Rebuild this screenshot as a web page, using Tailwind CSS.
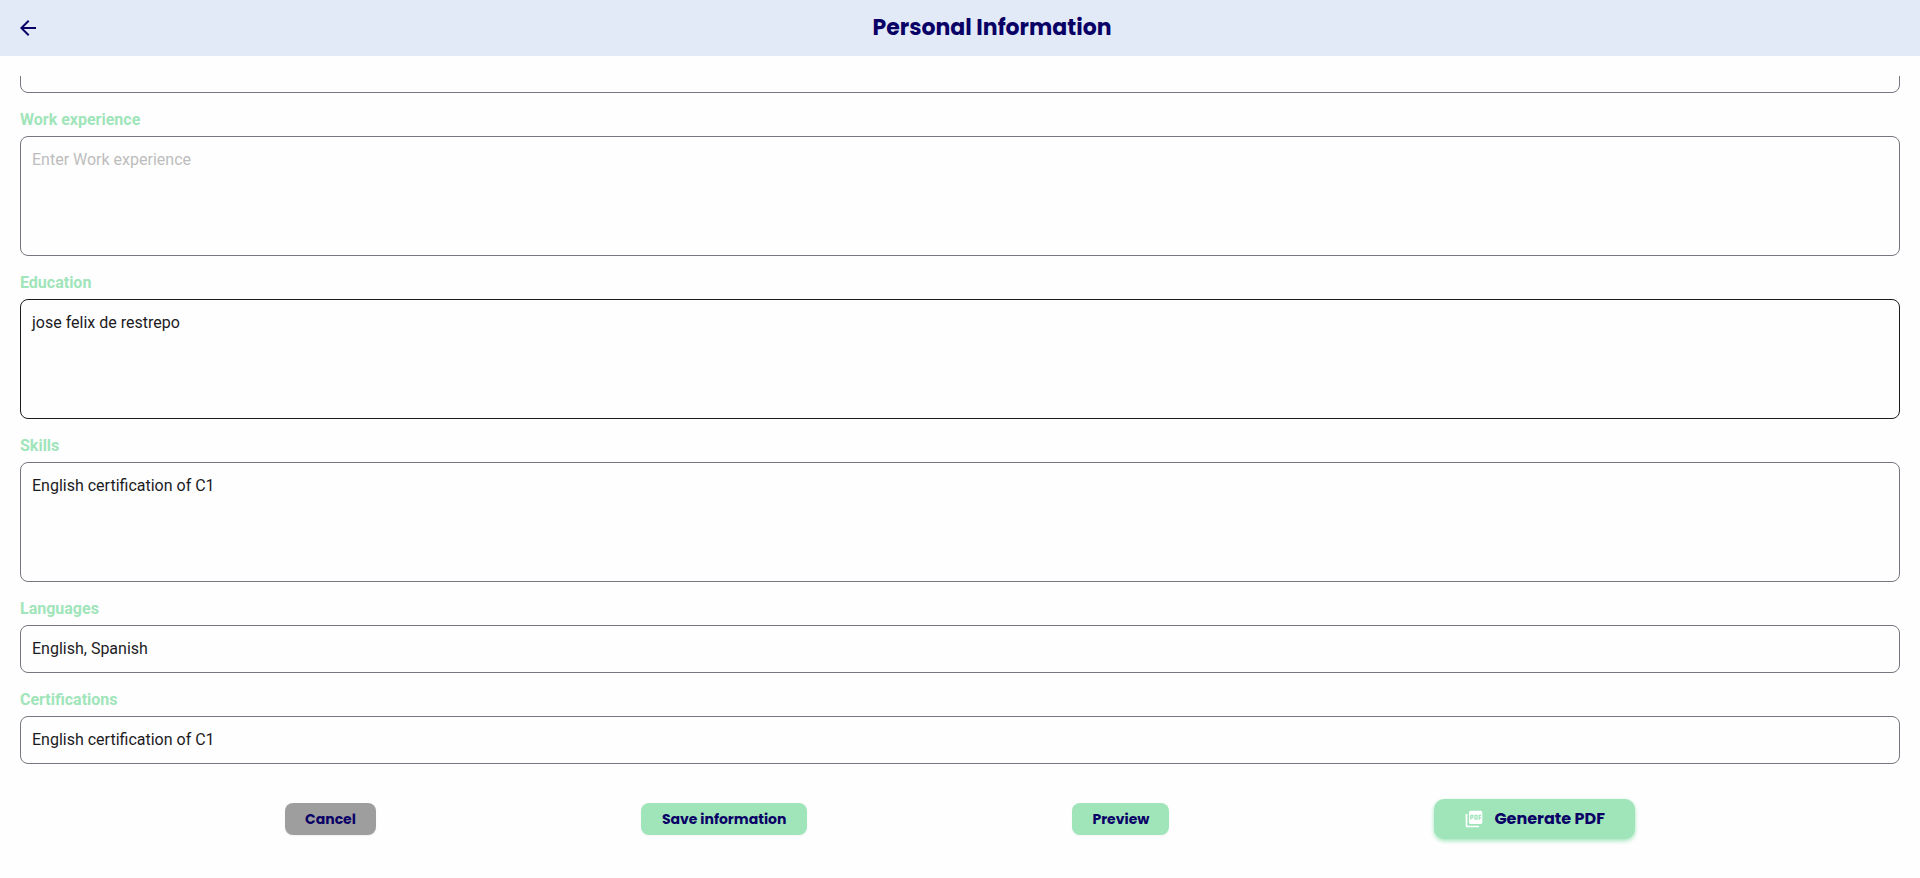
<!DOCTYPE html>
<html lang="en">
<head>
<meta charset="utf-8">
<meta name="viewport" content="width=device-width, initial-scale=1">
<title>Personal Information</title>
<script src="https://cdn.jsdelivr.net/npm/@tailwindcss/browser@4"></script>
</head>
<body class="flex h-screen flex-col bg-[#fefefe] font-[Roboto,sans-serif] text-base text-[#1c1b1f]">
  <header class="flex shrink-0 items-center gap-6 bg-[#e3eaf7] py-3 pl-4 text-[#090166]">
    <button type="button" aria-label="Back">
      <svg class="size-6" viewBox="0 0 24 24" fill="currentColor" aria-hidden="true"><path d="M20 11H7.83l5.59-5.59L12 4l-8 8 8 8 1.41-1.41L7.83 13H20v-2z"/></svg>
    </button>
    <h1 class="flex-1 text-center font-[Poppins,Inter,sans-serif] text-[22px] leading-8 font-bold">Personal Information</h1>
  </header>

  <form class="mt-5 flex min-h-0 flex-1 flex-col">
    <div class="flex min-h-0 flex-1 flex-col justify-end overflow-hidden px-5">
      <textarea aria-label="Profile" class="block h-[120px] w-full shrink-0 resize-none rounded-lg border border-[#79747e] px-[11px] py-[11px] leading-6"></textarea>

      <label for="work" class="mt-[17px] mb-[7px] leading-[19px] font-bold text-[#a0e5ba]">Work experience</label>
      <textarea id="work" placeholder="Enter Work experience" class="block h-[120px] w-full shrink-0 resize-none rounded-lg border border-[#79747e] px-[11px] py-[11px] leading-6 placeholder:text-[#bdbdbd]"></textarea>

      <label for="education" class="mt-[17px] mb-[7px] leading-[19px] font-bold text-[#a0e5ba]">Education</label>
      <textarea id="education" class="block h-[120px] w-full shrink-0 resize-none rounded-lg border border-[#1c1b1f] px-[11px] py-[11px] leading-6">jose felix de restrepo</textarea>

      <label for="skills" class="mt-[17px] mb-[7px] leading-[19px] font-bold text-[#a0e5ba]">Skills</label>
      <textarea id="skills" class="block h-[120px] w-full shrink-0 resize-none rounded-lg border border-[#79747e] px-[11px] py-[11px] leading-6">English certification of C1</textarea>

      <label for="languages" class="mt-[17px] mb-[7px] leading-[19px] font-bold text-[#a0e5ba]">Languages</label>
      <input id="languages" type="text" value="English, Spanish" class="w-full shrink-0 rounded-lg border border-[#79747e] px-[11px] py-[11px] leading-6">

      <label for="certifications" class="mt-[17px] mb-[7px] leading-[19px] font-bold text-[#a0e5ba]">Certifications</label>
      <input id="certifications" type="text" value="English certification of C1" class="w-full shrink-0 rounded-lg border border-[#79747e] px-[11px] py-[11px] leading-6">
    </div>

    <div class="flex shrink-0 items-center justify-evenly px-5 pt-[35px] pb-[39px] font-[Poppins,Inter,sans-serif] text-sm font-bold text-[#090166]">
      <button type="button" class="rounded-lg bg-[#9e9e9e] px-5 py-1.5 leading-5 shadow-xs">Cancel</button>
      <button type="submit" class="rounded-lg bg-[#a0e5ba] px-[21px] py-1.5 leading-5 shadow-xs">Save information</button>
      <button type="button" class="rounded-lg bg-[#a0e5ba] px-5 py-1.5 leading-5 shadow-xs">Preview</button>
      <button type="button" class="flex items-center gap-2.5 rounded-[10px] bg-[#a0e5ba] px-[30px] py-2 text-base leading-6 shadow-[0_2px_4px_#a0e5ba]">
        <svg class="size-5 text-white" viewBox="0 0 24 24" fill="currentColor" aria-hidden="true"><path d="M20 2H8c-1.1 0-2 .9-2 2v12c0 1.1.9 2 2 2h12c1.1 0 2-.9 2-2V4c0-1.1-.9-2-2-2zm-8.500 7.500c0 .83-.67 1.500-1.500 1.500H9v2H7.500V7H10c.83 0 1.500.67 1.500 1.500v1zm5 2c0 .83-.67 1.500-1.500 1.500h-2.500V7H15c.83 0 1.500.67 1.500 1.500v3zm4-3H19v1h1.500V11H19v2h-1.500V7h3v1.500zM9 9.500h1v-1H9v1zM4 6H2v14c0 1.100.9 2 2 2h14v-2H4V6zm10 5.500h1v-3h-1v3z"/></svg>
        Generate PDF
      </button>
    </div>
  </form>
</body>
</html>
